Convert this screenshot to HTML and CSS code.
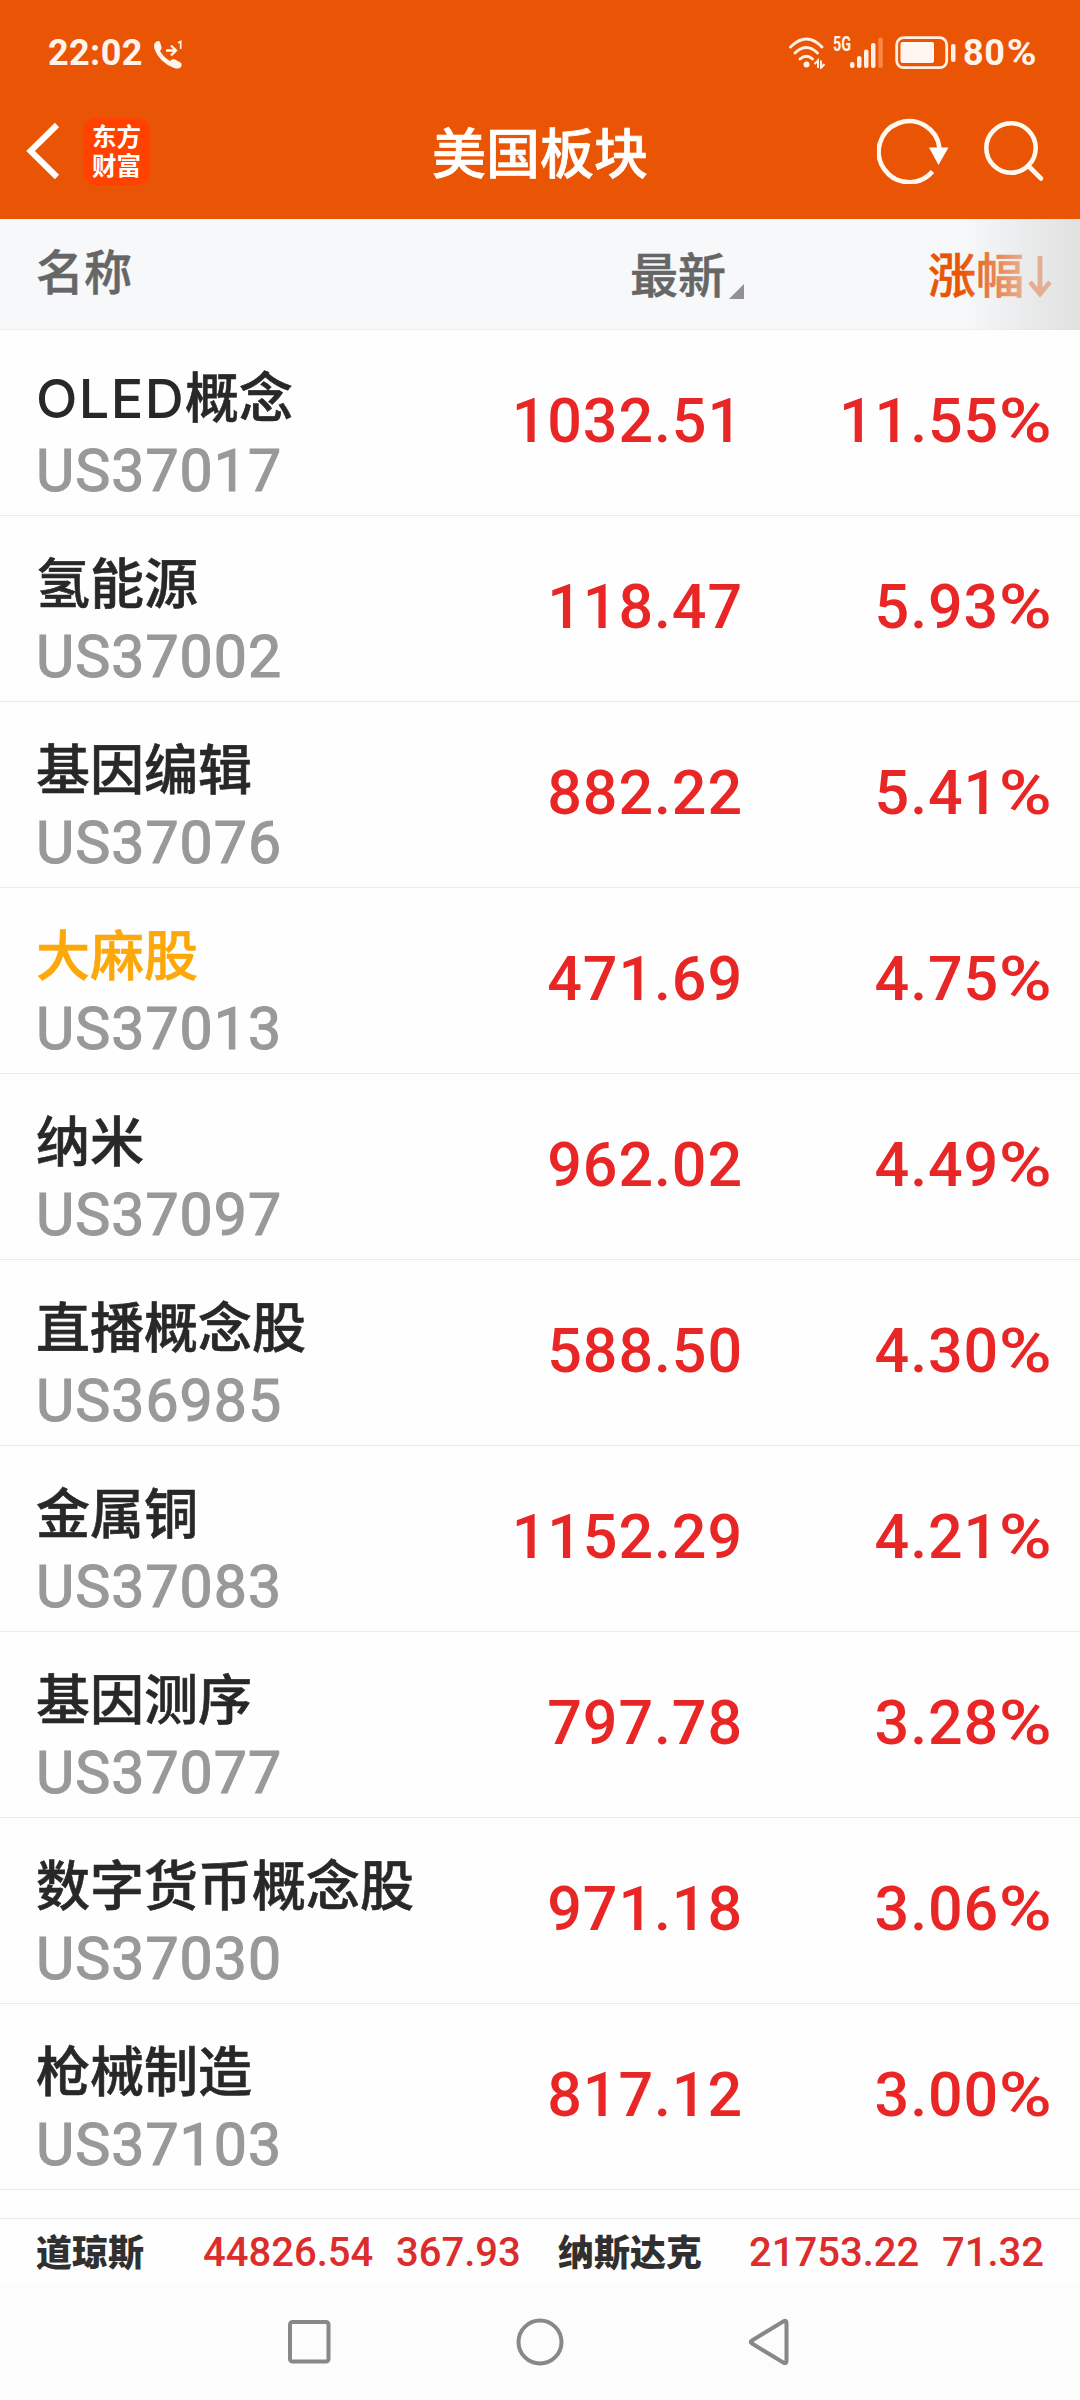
FILE: index.html
```html
<!DOCTYPE html>
<html lang="zh-CN">
<head>
<meta charset="utf-8">
<title>美国板块</title>
<link rel="stylesheet" href="styles.css">
</head>
<body>
<header class="top">
  <div class="status">
    <span class="clock">22:02</span>
    <svg class="call" width="30" height="30" viewBox="0 0 30 30">
      <path d="M1.500 3.500Q3 .8 5.500 1Q7 1 7.300 3L8.500 7Q9 9 7 11Q10.500 17 17 21L19 19.500Q20.500 18.500 22 19.500L27.500 22.500Q29.500 24.500 28 27Q26 29.500 21 28Q6 22 1.500 9Q.5 5 1.500 3.500Z" fill="#fff4ec"/>
      <path d="M13 10.500H22M18 5.500L23 10.500L18 15.500" fill="none" stroke="#fff4ec" stroke-width="2.300"/>
      <path d="M25 3L27.700 1.500V9" fill="none" stroke="#fff4ec" stroke-width="1.700"/>
    </svg>
    <svg class="wifi" width="38" height="32" viewBox="0 0 38 32">
      <g fill="none" stroke="#fff0e6" stroke-width="2.900" stroke-linecap="round">
        <path d="M2.500 10Q18.500 -6 34 10"/><path d="M7 16Q18.500 5 29.500 16"/><path d="M12 22Q18.500 16.500 24.500 22"/>
      </g>
      <circle cx="18.500" cy="27.500" r="3" fill="#fff0e6"/>
      <path d="M26.500 27L30 23.500V31M33 23.500V31L36.500 27" fill="none" stroke="#fff0e6" stroke-width="2"/>
    </svg>
    <span class="net">5G</span>
    <svg class="signal" width="34" height="32" viewBox="0 0 34 32">
      <g fill="#fff0e6"><rect x="0" y="25" width="4.500" height="6" rx="2"/><rect x="7" y="19" width="4.500" height="12" rx="2"/><rect x="14" y="12.500" width="4.500" height="18.500" rx="2"/><rect x="21" y="6" width="4.500" height="25" rx="2"/></g>
      <rect x="28.300" y=".5" width="4.500" height="30.500" rx="2" fill="#ff8544"/>
    </svg>
    <svg class="battery" width="62" height="34" viewBox="0 0 62 34">
      <rect x="1.700" y="1.700" width="50" height="30" rx="7" fill="none" stroke="#fff0e6" stroke-width="2.800"/>
      <rect x="5.500" y="6" width="33.500" height="21" rx="2" fill="#fff6f2"/>
      <rect x="56" y="8" width="4.500" height="18" rx="2" fill="#fff0e6"/>
    </svg>
    <span class="percent">80<span class="pct">%</span></span>
  </div>
  <nav class="bar">
    <div class="bar-left">
      <svg width="36" height="58" viewBox="0 0 36 58"><path d="M32 3L5.500 29L32 55" fill="none" stroke="#fff" stroke-width="6"/></svg>
      <div class="logo">东方<br>财富</div>
    </div>
    <h1 class="title">美国板块</h1>
    <div class="bar-right">
      <svg width="72" height="66" viewBox="0 0 72 66"><path d="M55.500 53.400A30.500 30.500 0 1 1 62.500 30" fill="none" stroke="#fff8ee" stroke-width="4.600"/><path d="M52 29.500H71.500L61.500 47Z" fill="#fff"/></svg>
      <svg width="62" height="62" viewBox="0 0 62 62"><circle cx="28" cy="28" r="24.700" fill="none" stroke="#fff8ee" stroke-width="4.600"/><path d="M45.500 46L58 58.500" stroke="#fff8ee" stroke-width="4.600" stroke-linecap="round"/></svg>
    </div>
  </nav>
</header>
<section class="head">
  <span class="head-name">名称</span>
  <span class="head-last">最新<i class="corner"></i></span>
  <span class="head-rise">涨幅<svg width="24" height="44" viewBox="0 0 24 44"><path d="M12 1V40M2 27L12 39L22 27" fill="none" stroke="#e95504" stroke-width="4.800"/></svg></span>
</section>
<main class="list">
  <div class="row"><div><p class="name"><span class="latin">OLED</span>概念</p><p class="code">US37017</p></div><span class="num">1032.51</span><span class="num">11.55<span class="pct">%</span></span></div>
  <div class="row"><div><p class="name">氢能源</p><p class="code">US37002</p></div><span class="num">118.47</span><span class="num">5.93<span class="pct">%</span></span></div>
  <div class="row"><div><p class="name">基因编辑</p><p class="code">US37076</p></div><span class="num">882.22</span><span class="num">5.41<span class="pct">%</span></span></div>
  <div class="row"><div><p class="name marked">大麻股</p><p class="code">US37013</p></div><span class="num">471.69</span><span class="num">4.75<span class="pct">%</span></span></div>
  <div class="row"><div><p class="name">纳米</p><p class="code">US37097</p></div><span class="num">962.02</span><span class="num">4.49<span class="pct">%</span></span></div>
  <div class="row"><div><p class="name">直播概念股</p><p class="code">US36985</p></div><span class="num">588.50</span><span class="num">4.30<span class="pct">%</span></span></div>
  <div class="row"><div><p class="name">金属铜</p><p class="code">US37083</p></div><span class="num">1152.29</span><span class="num">4.21<span class="pct">%</span></span></div>
  <div class="row"><div><p class="name">基因测序</p><p class="code">US37077</p></div><span class="num">797.78</span><span class="num">3.28<span class="pct">%</span></span></div>
  <div class="row"><div><p class="name">数字货币概念股</p><p class="code">US37030</p></div><span class="num">971.18</span><span class="num">3.06<span class="pct">%</span></span></div>
  <div class="row"><div><p class="name">枪械制造</p><p class="code">US37103</p></div><span class="num">817.12</span><span class="num">3.00<span class="pct">%</span></span></div>
</main>
<footer class="ticker">
  <div class="index dow"><b>道琼斯</b><span>44826.54</span><span>367.93</span></div>
  <div class="index nasdaq"><b>纳斯达克</b><span>21753.22</span><span>71.32</span></div>
</footer>
<nav class="keys">
  <svg width="48" height="52" viewBox="0 0 48 52"><rect x="5" y="5" width="38.500" height="39.500" rx="2.500" fill="none" stroke="#888" stroke-width="4"/></svg>
  <svg width="48" height="52" viewBox="0 0 48 52"><circle cx="24" cy="25" r="21.500" fill="none" stroke="#888" stroke-width="4"/></svg>
  <svg width="48" height="52" viewBox="0 0 48 52"><path d="M5 23.500L37 4Q39.500 3 39.500 6V44Q39.500 47 37 46L5 26.500Q2.500 25 5 23.500Z" fill="none" stroke="#888" stroke-width="4"/></svg>
</nav>
</body>
</html>
```
FILE: styles.css
```css
* { box-sizing: border-box; margin: 0; padding: 0; }
body {
  width: 1080px;
  height: 2400px;
  display: flex;
  flex-direction: column;
  overflow: hidden;
  background: #fefefe;
  font-family: "Noto Sans CJK SC", sans-serif;
}
svg { display: block; flex: none; }

.top { height: 219px; background: #e95504; color: #fff; }
.status {
  height: 105px;
  padding: 0 43px 0 48px;
  display: flex;
  align-items: center;
  font-family: Roboto, sans-serif;
  font-weight: 700;
  font-size: 36px;
  color: #fff4ec;
}
.clock { width: 105px; letter-spacing: .4px; }
.call { margin-top: 4px; }
.wifi { margin-left: auto; }
.net { align-self: flex-start; margin: 34px 0 0 7px; width: 18px; font-size: 20px; line-height: 20px; white-space: nowrap; transform: scaleX(.72); transform-origin: left; }
.signal { margin: 0 11px 0 -1px; }
.battery { margin: 1px 6px 0 0; }
.percent { width: 74px; white-space: nowrap; letter-spacing: .6px; }
.pct { display: inline-block; transform: scaleX(1.18); transform-origin: right; margin-left: 8px; }
.percent .pct { margin-left: 4px; transform: scaleX(1.12); }

.bar { height: 96px; margin-top: -2px; display: grid; grid-template-columns: 1fr auto 1fr; align-items: center; }
.bar-left { display: flex; align-items: center; gap: 22px; padding-left: 25px; }
.logo {
  width: 67px;
  height: 67px;
  border-radius: 13px;
  background: #ff4200;
  padding: 3px 0 0 9px;
  font: 700 24.5px/29px "Noto Sans CJK SC", sans-serif;
}
.title { font-size: 54px; font-weight: 500; line-height: 96px; -webkit-text-stroke: .7px #fff; }
.bar-right { display: flex; align-items: center; justify-content: flex-end; gap: 34px; padding-right: 35px; }

.head {
  position: relative;
  height: 111px;
  border-bottom: 1px solid #f0f0f0;
  background: #f6f8fa;
  display: grid;
  grid-template-columns: 630px 1fr auto;
  padding-right: 28px;
  font-size: 48px;
  font-weight: 500;
  line-height: 107px;
  color: #666;
  -webkit-text-stroke: .5px currentColor;
}
.head::after {
  content: "";
  position: absolute;
  inset: 0 0 -1px auto;
  width: 118px;
  background: linear-gradient(90deg, rgba(238,238,238,0), rgba(228,228,228,.6) 50%, rgba(217,217,217,.75));
}
.head-name { padding-left: 36px; line-height: 101px; }
.head-last { display: flex; }
.corner { width: 15px; height: 15px; margin: 65px 0 0 3px; background: #929295; clip-path: polygon(100% 0, 100% 100%, 0 100%); }
.head-rise { display: flex; color: #e95504; gap: 4px; }
.head-rise svg { margin-top: 36px; }

.list { height: 1888px; }
.row {
  height: 186px;
  border-bottom: 1px solid #ebebeb;
  display: grid;
  grid-template-columns: 443px 300px 309px;
}
.row > div { padding: 32px 0 0 36px; }
.name { font: 500 54px/74px Inter, "Noto Sans CJK SC", sans-serif; color: #282828; -webkit-text-stroke: .6px currentColor; }
.latin { letter-spacing: 1.4px; -webkit-text-stroke: 0; }
.marked { color: #fca80a; }
.code { font: 400 59px/70px Roboto, sans-serif; letter-spacing: 1px; color: #999; -webkit-text-stroke: 1.2px #999; }
.num { font: 500 61px/182px Roboto, sans-serif; letter-spacing: .9px; color: #e92626; text-align: right; white-space: nowrap; }
.num .pct { margin-right: -1px; }

.ticker { height: 66px; border-top: 1px solid #ebebeb; display: grid; grid-template-columns: 558px 1fr; color: #dc2c2c; font: 500 40px/68px Roboto, sans-serif; }
.index { display: flex; }
.index > * { flex: none; }
.index b { font: 900 36px/62px "Noto Sans CJK SC", sans-serif; color: #303030; }
.dow { padding-left: 36px; }
.dow b { width: 167px; }
.nasdaq b { width: 191px; }
.index b + span { width: 193px; }

.keys { height: 116px; background: #fcfcfc; display: flex; justify-content: center; gap: 183px; padding-top: 33px; }
```
